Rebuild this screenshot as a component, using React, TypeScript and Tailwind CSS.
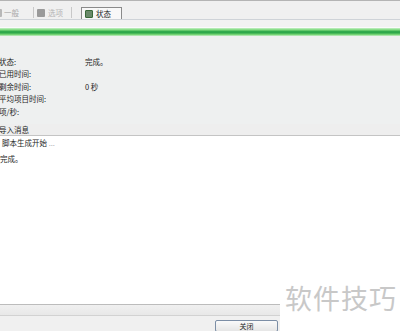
import React from 'react';

const rows: [string, string][] = [
  ['状态:', '完成。'],
  ['已用时间:', ''],
  ['剩余时间:', '0 秒'],
  ['平均项目时间:', ''],
  ['项/秒:', ''],
];

const font = "font-['Noto_Sans_CJK_SC','Noto_Sans',sans-serif]";

export default function App() {
  return (
    <div className={`relative w-[400px] h-[331px] overflow-hidden bg-[#f0f0f0] text-[#1e1e1e] ${font}`}>
      <div className="h-px bg-[#b4b4b4]" />
      {/* toolbar */}
      <div className="h-[18px] flex items-end text-[7.5px] text-[#a8a8a8]">
        <div className="flex items-center h-[12px] ml-[-6px] gap-[2px]">
          <span className="w-[8px] h-[8px] bg-[#b8b8b8] rounded-[1px]" />
          <span>一般</span>
        </div>
        <div className="w-px h-[11px] bg-[#c8c8c8] ml-[14px] mb-[1px]" />
        <div className="flex items-center h-[12px] ml-[3px] gap-[3px]">
          <span className="w-[8px] h-[8px] bg-[#9a9a9a] rounded-[1px]" />
          <span className="text-[#b4b4b4]">选项</span>
        </div>
        <div className="w-px h-[11px] bg-[#c8c8c8] ml-[8px] mb-[1px]" />
        <div className="flex items-center h-[12px] ml-[9px] w-[41px] pl-[3px] gap-[3px] border border-[#8a8a8a] border-b-0 bg-[#f8f8f8] text-[#1e1e1e]">
          <span className="w-[8px] h-[8px] rounded-[1px] bg-[#6a8a6a] border border-[#3a6a3a]" />
          <span>状态</span>
        </div>
      </div>
      <div className="h-px bg-[#cfd3d8]" />
      {/* progress */}
      <div className="h-[7px] bg-[#f2f2f2]" />
      <div className="h-px bg-[#fafafa]" />
      <div className="h-[8px] bg-[linear-gradient(#c8f0c8,#78d878_25%,#2ea84a_45%,#2ea84a_60%,#6ed06e_80%,#c8eec8)]" />
      <div className="h-[20px] bg-[#eef0f0]" />
      {/* stats */}
      <div className="text-[7.5px] bg-[#eef0f0]">
        {rows.map(([label, value]) => (
          <div key={label} className="flex h-[12.4px] leading-[12.4px]">
            <span className="w-[86px] ml-[-1px]">{label}</span>
            <span>{value}</span>
          </div>
        ))}
      </div>
      <div className="h-[6px] bg-[#eef0f0]" />
      <div className="h-[12px] leading-[12px] text-[7.5px] bg-[#eeeeee] pl-0 ml-[-1px] border-b border-[#c4c4c4]">导入消息</div>
      {/* log */}
      <div className="h-[168px] bg-white text-[7.5px] pt-[1px]">
        <div className="h-[12px] leading-[12px] pl-[2px]">
          脚本生成开始 <span className="text-[#b0b0b0]">...</span>
        </div>
        <div className="h-[12px] leading-[12px] mt-[4px]">完成。</div>
      </div>
      {/* footer */}
      <div className="h-px bg-[#bcbcbc]" />
      <div className="h-[10px] bg-[linear-gradient(#f0f0f0,#e8e8e8)]" />
      <div className="h-px bg-[#d2d2d2]" />
      <div className="flex h-[13px]">
        <div className="ml-[215px] mt-[4px] w-[63px] h-[12px] border border-[#7c8ea6] rounded-[2px] bg-[linear-gradient(#fafafa,#e6e6e6)] text-[7px] leading-[10px] text-center">
          关闭
        </div>
      </div>
      {/* watermark */}
      <div className="absolute left-[280px] top-[279px] w-[120px] h-[52px] bg-white">
        <div className="pl-[5px] pt-[1px] text-[27px] leading-[36px] tracking-[1px] text-[#c8c8c8]">软件技巧</div>
      </div>
    </div>
  );
}
